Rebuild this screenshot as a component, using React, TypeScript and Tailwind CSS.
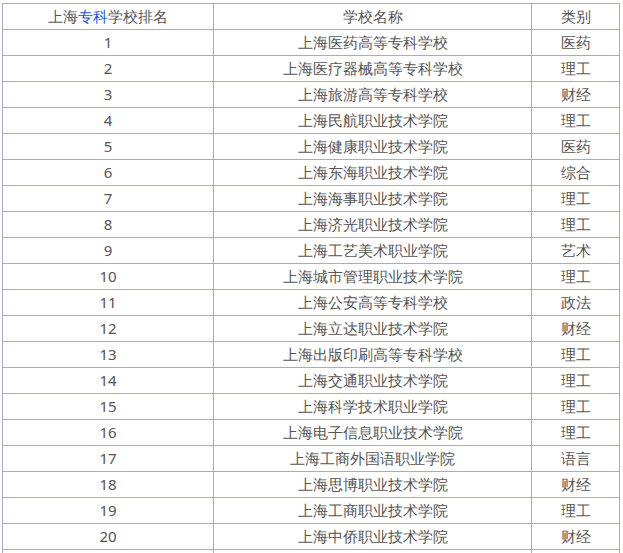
import React from 'react';

const rows: [string, string][] = [
  ['上海医药高等专科学校', '医药'],
  ['上海医疗器械高等专科学校', '理工'],
  ['上海旅游高等专科学校', '财经'],
  ['上海民航职业技术学院', '理工'],
  ['上海健康职业技术学院', '医药'],
  ['上海东海职业技术学院', '综合'],
  ['上海海事职业技术学院', '理工'],
  ['上海济光职业技术学院', '理工'],
  ['上海工艺美术职业学院', '艺术'],
  ['上海城市管理职业技术学院', '理工'],
  ['上海公安高等专科学校', '政法'],
  ['上海立达职业技术学院', '财经'],
  ['上海出版印刷高等专科学校', '理工'],
  ['上海交通职业技术学院', '理工'],
  ['上海科学技术职业学院', '理工'],
  ['上海电子信息职业技术学院', '理工'],
  ['上海工商外国语职业学院', '语言'],
  ['上海思博职业技术学院', '财经'],
  ['上海工商职业技术学院', '理工'],
  ['上海中侨职业技术学院', '财经'],
  ['', ''],
];

const td = 'border border-[#aaa6d6] h-[26px] p-0 text-center align-middle leading-none';

export default function App() {
  return (
    <div className="bg-white h-[553px] overflow-hidden pt-[3px] pl-[2px] text-[15px] text-[#555] font-['Noto_Sans_CJK_SC',sans-serif]">
      <table className="border-collapse border-t border-t-[#b22222] table-fixed w-[617px]">
        <colgroup>
          <col className="w-[211px]" />
          <col className="w-[318px]" />
          <col className="w-[88px]" />
        </colgroup>
        <tbody>
          <tr>
            <td className={td}>上海<span className="text-[#2255dd]">专科</span>学校排名</td>
            <td className={td}>学校名称</td>
            <td className={td}>类别</td>
          </tr>
          {rows.map(([name, cat], i) => (
            <tr key={i}>
              <td className={td}>{name ? i + 1 : ''}</td>
              <td className={td}>{name}</td>
              <td className={td}>{cat}</td>
            </tr>
          ))}
        </tbody>
      </table>
    </div>
  );
}
